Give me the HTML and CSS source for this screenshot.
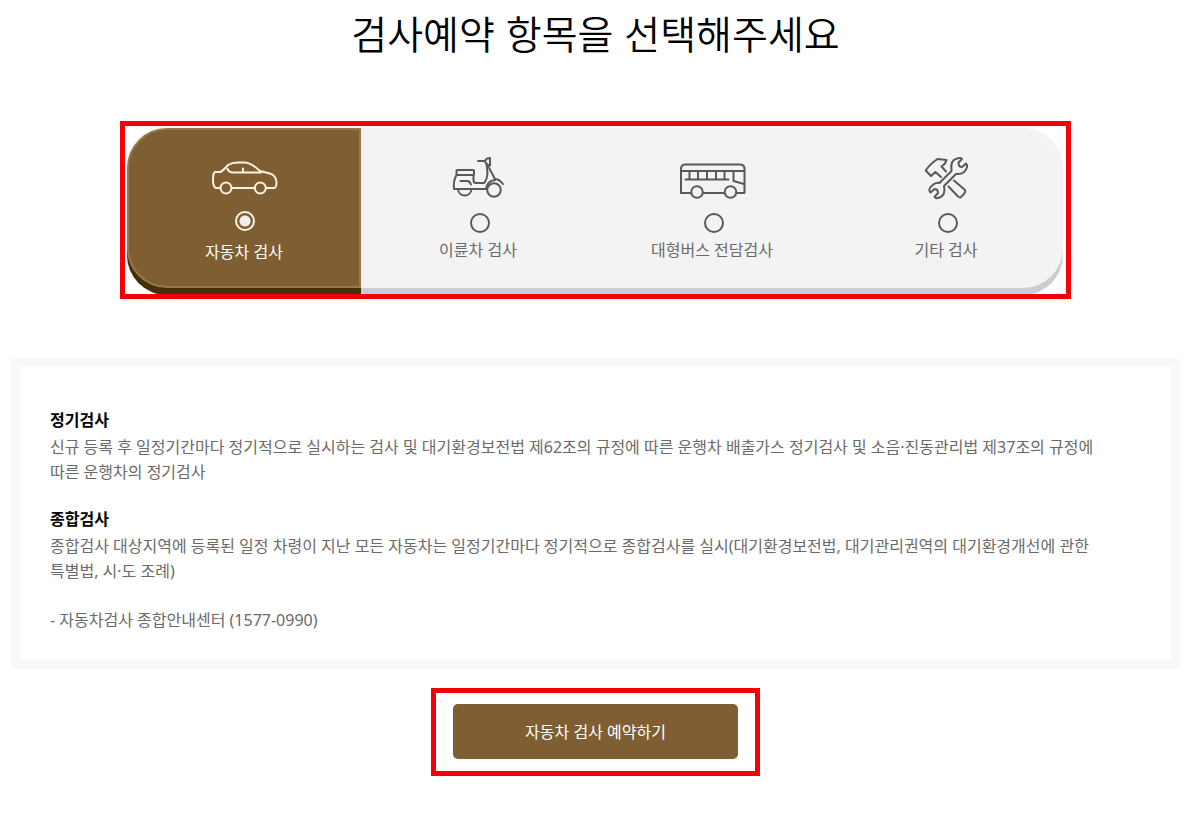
FILE: index.html
```html
<!DOCTYPE html>
<html lang="ko">
<head>
    <meta charset="UTF-8">
    <meta name="viewport" content="width=device-width, initial-scale=1.0">
    <title>검사예약</title>
    <link rel="stylesheet" href="styles.css">
</head>
<body>
    <h1>검사예약 항목을 선택해주세요</h1>

    <form>
        <div class="picker">
            <div class="tabs">
                <label class="tab">
                    <svg class="icon" viewBox="0 0 72 48">
                        <path d="M12.5 34H8Q5 33 5 26Q5 19 7 18H12Q15 17 20 11Q24 8.5 30 8.5H36Q43 8.5 52 17L60 19Q68 20.5 68.5 28Q68.5 34 66 34H58M24 34H46.5"/>
                        <path d="M19.5 15Q21 18.5 25 18.5H53M35 14.5V18.5"/>
                        <circle cx="18" cy="34" r="5.5"/>
                        <circle cx="52.3" cy="34" r="5.5"/>
                    </svg>
                    <input type="radio" name="kind" value="car" checked>
                    <span>자동차 검사</span>
                </label>
                <label class="tab">
                    <svg class="icon" viewBox="0 0 72 48">
                        <path d="M36 7H43Q44 4 48 4V11.5Q44 11 43 7"/>
                        <path d="M44.5 10L45.5 19Q45 26 42 29H34Q31.5 29 31.5 26V21"/>
                        <rect x="14.5" y="16" width="17.5" height="5" rx="1"/>
                        <path d="M14.5 21Q11 27 12 35H44Q45 27 53 26M46 12L53 25Q57 25 61 30"/>
                        <path d="M18.5 27H25Q28 27 29 30.5"/>
                        <path d="M16 35.5A6.8 6.8 0 0 0 29.5 35.5"/>
                        <circle cx="52" cy="36" r="6.8"/>
                    </svg>
                    <input type="radio" name="kind" value="bike">
                    <span>이륜차 검사</span>
                </label>
                <label class="tab">
                    <svg class="icon" viewBox="0 0 72 48">
                        <path d="M15 39H5V15Q5 10.5 9.5 10.5H64Q68.5 10.5 68.5 15V39H60.5M27 39H48"/>
                        <path d="M5 17H68M9.5 25.5H52.5M13.5 17V25M22 17V25M31 17V25M40 17V25M48.5 17V25M57.5 17V27L68 30"/>
                        <circle cx="21" cy="38" r="5.8"/>
                        <circle cx="54.5" cy="38" r="5.8"/>
                    </svg>
                    <input type="radio" name="kind" value="bus">
                    <span>대형버스 전담검사</span>
                </label>
                <label class="tab">
                    <svg class="icon" viewBox="0 0 72 48">
                        <path d="M31 23L25.5 18L21 22L15.7 16.5Q20 10 27.5 5L36.5 6L35 9.5L31.5 12.5L36 17.5"/>
                        <path d="M44 26.5L55 36Q56.5 38 51 43Q50 44 48 42.5L38.5 32.5"/>
                        <path d="M24 30Q27 28 29.5 29L41.5 17Q40 6 47 4.5Q51 3.5 52 5L48.5 8.5Q48.5 13 52 13L56 9.5Q59 13 54 18Q51 20.5 46 20L34 32Q36 41 29.5 43.5Q26 45 24.5 43L28 39Q28 35 24.5 35L20.5 38.5Q17 35 24 30Z"/>
                    </svg>
                    <input type="radio" name="kind" value="etc">
                    <span>기타 검사</span>
                </label>
            </div>
        </div>

        <div class="info">
            <h2>정기검사</h2>
            <p>신규 등록 후 일정기간마다 정기적으로 실시하는 검사 및 대기환경보전법 제62조의 규정에 따른 운행차 배출가스 정기검사 및 소음·진동관리법 제37조의 규정에<br>따른 운행차의 정기검사</p>
            <h2>종합검사</h2>
            <p>종합검사 대상지역에 등록된 일정 차령이 지난 모든 자동차는 일정기간마다 정기적으로 종합검사를 실시(대기환경보전법, 대기관리권역의 대기환경개선에 관한<br>특별법, 시·도 조례)</p>
            <p class="contact">- 자동차검사 종합안내센터 (1577-0990)</p>
        </div>

        <div class="submit">
            <button type="submit">자동차 검사 예약하기</button>
        </div>
    </form>
</body>
</html>
```
FILE: styles.css
```css
* {
    box-sizing: border-box;
}

body {
    margin: 0;
    padding: 0 4px 32px 11px;
    background: #fff;
    color: #6a6a6a;
    font-family: "Noto Sans", "Noto Sans CJK KR", sans-serif;
    font-size: 16px;
    line-height: 25px;
}

h1 {
    margin: 2px 0 59px;
    color: #000;
    font-family: "Noto Sans CJK KR", sans-serif;
    font-size: 39px;
    font-weight: 350;
    line-height: 60px;
    text-align: center;
}

.picker {
    max-width: 951px;
    margin: 0 auto 59px;
    padding: 2px;
    border: 5px solid #f60008;
    overflow: hidden;
}

.tabs {
    display: grid;
    grid-template-columns: repeat(4, 1fr);
    height: 160px;
    margin-bottom: 4px;
    max-width: 936px;
    border-radius: 40px;
    background: #f3f3f3;
    box-shadow: 0 7px 0 #cbced1;
}

.tab {
    display: flex;
    flex-direction: column;
    align-items: center;
    padding-top: 26px;
    line-height: 20px;
    cursor: pointer;
}

.tab:has(input:checked) {
    padding-top: 24px;
    border: 2px solid #957a50;
    border-radius: 40px 0 0 40px;
    background: #7e5e32;
    box-shadow: 0 7px 0 #452e08;
    color: #fff;
}

.icon {
    width: 72px;
    height: 48px;
    fill: none;
    stroke: #58595b;
    stroke-width: 2;
    stroke-linecap: round;
    stroke-linejoin: round;
}

.tab:has(input:checked) .icon {
    stroke: #fff3e0;
}

.tab input {
    appearance: none;
    width: 20px;
    height: 20px;
    margin: 11px 0 7px 4px;
    border: 2px solid #58595b;
    border-radius: 50%;
}

.tab input:checked {
    margin: 9px 0 11px 2px;
    border-color: #fff3e0;
    background: radial-gradient(circle, #f5eeee 5px, transparent 6px);
}

.info {
    margin-bottom: 19px;
    padding: 41px 30px 27px;
    border: 9px solid #f8f8f8;
    border-radius: 5px;
}

.info h2 {
    margin: 0 0 2px;
    color: #000;
    font-size: 16px;
    font-weight: bold;
}

.info p {
    margin: 0 0 22px;
}

.info .contact {
    margin: 24px 0 0;
}

.submit {
    width: 329px;
    margin: 0 auto;
    padding: 11px 17px 12px;
    border: 5px solid #f60008;
}

.submit button {
    width: 100%;
    height: 55px;
    padding: 0 0 2px;
    border: 0;
    border-radius: 5px;
    background: #7e5e32;
    color: #fff;
    font-family: inherit;
    font-size: 16px;
    cursor: pointer;
}
```
